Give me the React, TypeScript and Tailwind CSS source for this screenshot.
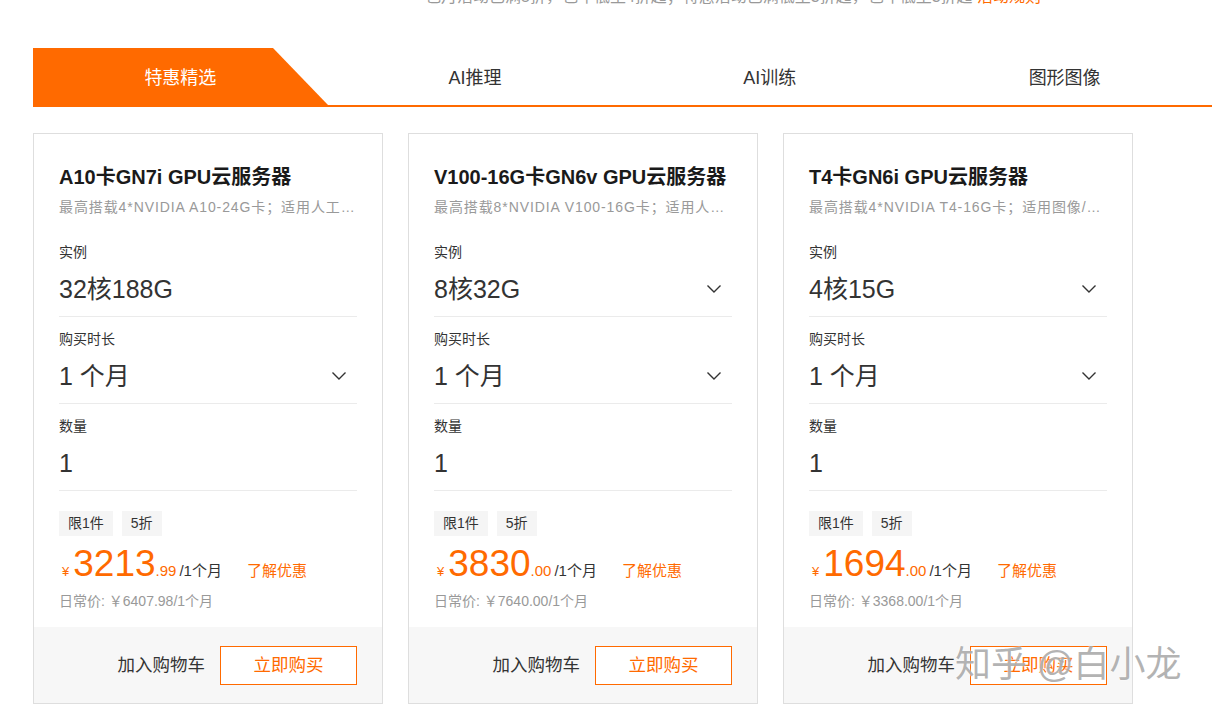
import React from "react";

interface Product {
  title: string;
  desc: string;
  instance: string;
  instanceSelect: boolean;
  price: string;
  cents: string;
  original: string;
}

const products: Product[] = [
  {
    title: "A10卡GN7i GPU云服务器",
    desc: "最高搭载4*NVIDIA A10-24G卡；适用人工智能推理、图形图像处理等场景",
    instance: "32核188G",
    instanceSelect: false,
    price: "3213",
    cents: ".99",
    original: "6407.98",
  },
  {
    title: "V100-16G卡GN6v GPU云服务器",
    desc: "最高搭载8*NVIDIA V100-16G卡；适用人工智能训练等场景",
    instance: "8核32G",
    instanceSelect: true,
    price: "3830",
    cents: ".00",
    original: "7640.00",
  },
  {
    title: "T4卡GN6i GPU云服务器",
    desc: "最高搭载4*NVIDIA T4-16G卡；适用图像/视频处理等场景",
    instance: "4核15G",
    instanceSelect: true,
    price: "1694",
    cents: ".00",
    original: "3368.00",
  },
];

const tabs = ["特惠精选", "AI推理", "AI训练", "图形图像"];

const Chevron = () => (
  <svg width="16" height="10" viewBox="0 0 16 10" fill="none">
    <path d="M1.5 1.5 L8 8 L14.5 1.5" stroke="#333" strokeWidth="1.4" />
  </svg>
);

const Field: React.FC<{ label: string; value: string; select?: boolean; first?: boolean }> = ({
  label,
  value,
  select,
  first,
}) => (
  <div className={first ? "mt-[25px]" : "mt-[12px]"}>
    <div className="text-[14px] leading-[20px] text-[#333]">{label}</div>
    <div className="h-[55px] flex items-center justify-between border-b border-[#ebebeb] pr-[10px]">
      <span className="text-[25px] text-[#333] pt-[2px]">{value}</span>
      {select && <Chevron />}
    </div>
  </div>
);

const ProductCard: React.FC<{ p: Product }> = ({ p }) => (
  <div className="w-[350px] border border-[#dedede] bg-white flex flex-col">
    <div className="px-[25px] pt-[31px] pb-[16px]">
      <h3 className="text-[20px] leading-[24px] font-bold text-[#1a1a1a] whitespace-nowrap">{p.title}</h3>
      <p className="mt-[8px] text-[14px] leading-[20px] tracking-[0.9px] text-[#999] whitespace-nowrap overflow-hidden text-ellipsis">
        {p.desc}
      </p>
      <Field label="实例" value={p.instance} select={p.instanceSelect} first />
      <Field label="购买时长" value="1 个月" select />
      <Field label="数量" value="1" />
      <div className="mt-[20px] flex gap-[9px] text-[14px] text-[#333]">
        <span className="h-[25px] px-[9px] leading-[25px] bg-[#f5f5f5]">限1件</span>
        <span className="h-[25px] px-[9px] leading-[25px] bg-[#f5f5f5]">5折</span>
      </div>
      <div className="mt-[8px] flex items-baseline h-[40px]">
        <span className="text-[13px] text-[#ff6a00] ml-[3px] mr-[4px]">¥</span>
        <span className="text-[37px] leading-[40px] text-[#ff6a00]">{p.price}</span>
        <span className="text-[15px] text-[#ff6a00]">{p.cents}</span>
        <span className="text-[15px] text-[#333] ml-[3px]">/1个月</span>
        <span className="text-[15px] text-[#ff6a00] ml-[25px]">了解优惠</span>
      </div>
      <div className="mt-[7px] text-[14px] leading-[20px] text-[#999]">
        日常价: ￥{p.original}/1个月
      </div>
    </div>
    <div className="h-[76px] bg-[#f7f7f7] flex items-center justify-end gap-[15px] px-[25px]">
      <span className="text-[17.5px] text-[#333]">加入购物车</span>
      <button className="w-[137px] h-[39px] border border-[#ff6a00] text-[17.5px] text-[#ff6a00] bg-white">
        立即购买
      </button>
    </div>
  </div>
);

export default function App() {
  return (
    <div
      className="relative w-[1212px] h-[716px] overflow-hidden bg-white"
      style={{ fontFamily: '"Liberation Sans", "Noto Sans CJK SC", sans-serif' }}
    >
      <div className="h-[6px] overflow-hidden">
        <div className="-mt-[14px] ml-[425px] whitespace-nowrap text-[16px] leading-[22px] text-[#999]">
          包月活动已满5折，包年低至4折起；特惠活动已满低至3折起，包年低至3折起{" "}
          <span className="text-[#ff6a00]">活动规则</span>
        </div>
      </div>

      <div className="mt-[42px] ml-[33px] flex border-b-2 border-[#ff6a00]">
        {tabs.map((t, i) => (
          <div
            key={t}
            className={
              i === 0
                ? "w-[295px] h-[57px] pt-[4px] flex items-center justify-center text-[18px] text-white bg-[#ff6a00] [clip-path:polygon(0_0,240px_0,295px_100%,0_100%)]"
                : "w-[295px] h-[57px] pt-[4px] flex items-center justify-center text-[18px] text-[#333]"
            }
          >
            <span>{t}</span>
          </div>
        ))}
      </div>

      <div className="mt-[26px] ml-[33px] flex gap-[25px]">
        {products.map((p) => (
          <ProductCard key={p.title} p={p} />
        ))}
      </div>

      <div className="absolute left-[955px] top-[643px] text-[36px] leading-[44px] text-[#9a9a9a]/75 whitespace-nowrap [text-shadow:0_0_2px_#fff]">
        知乎 @白小龙
      </div>
    </div>
  );
}
